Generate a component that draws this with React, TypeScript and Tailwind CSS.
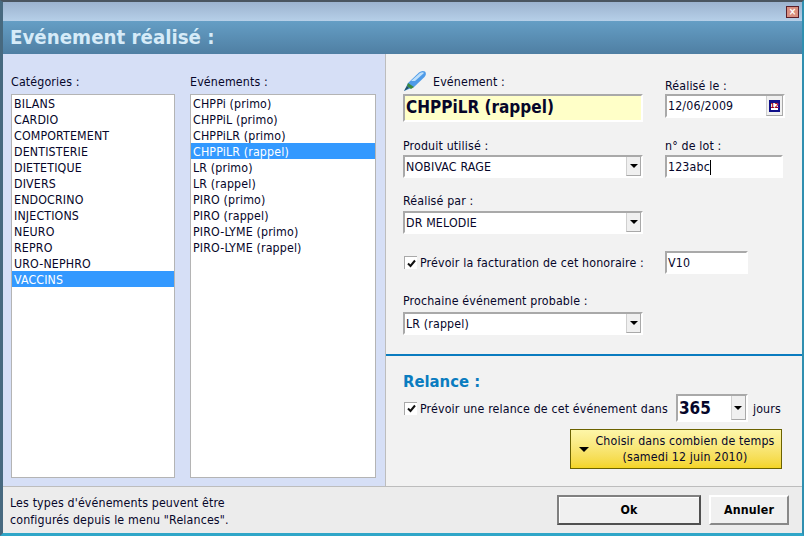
const categories = ['BILANS', 'CARDIO', 'COMPORTEMENT', 'DENTISTERIE', 'DIETETIQUE', 'DIVERS', 'ENDOCRINO', 'INJECTIONS', 'NEURO', 'REPRO', 'URO-NEPHRO', 'VACCINS']
const events = ['CHPPi (primo)', 'CHPPiL (primo)', 'CHPPiLR (primo)', 'CHPPiLR (rappel)', 'LR (primo)', 'LR (rappel)', 'PIRO (primo)', 'PIRO (rappel)', 'PIRO-LYME (primo)', 'PIRO-LYME (rappel)']

const sunken = 'border-2 border-t-[#a9a9a9] border-l-[#a9a9a9] border-r-white border-b-white'

function ListBox({ items, selected, className }: { items: string[]; selected: string; className: string }) {
  return (
    <ul className={`h-[384px] border border-[#b4b4b4] bg-white ${className}`}>
      {items.map((item) => (
        <li key={item} className={`h-4 pl-[2px] leading-[18px] ${item === selected ? 'bg-[#3399ff] text-white' : 'text-[#06062a]'}`}>
          {item}
        </li>
      ))}
    </ul>
  )
}

function Arrow() {
  return <span className="block h-0 w-0 border-x-[4px] border-t-[4px] border-x-transparent border-t-black" />
}

function Combo({ value }: { value: string }) {
  return (
    <div className={`flex h-[23px] w-[240px] items-center justify-between bg-white ${sunken}`}>
      <span className="pt-px pl-[1px] text-[#06062a]">{value}</span>
      <span className="flex h-[19px] w-[15px] items-center justify-center border-r border-b border-l border-r-[#a9a9a9] border-b-[#a9a9a9] border-l-[#d0d0d0] bg-[#f0f0f0]">
        <Arrow />
      </span>
    </div>
  )
}

function Check({ label }: { label: string }) {
  return (
    <label className="flex items-center gap-[3px] text-[#06062a]">
      <span className="flex h-[13px] w-[13px] items-center justify-center border-t border-l border-t-[#a9a9a9] border-l-[#a9a9a9] bg-white">
        <svg width="9" height="9" viewBox="0 0 9 9">
          <path d="M1 4.5 L3.5 7 L8 1.5" fill="none" stroke="#111" strokeWidth="2" />
        </svg>
      </span>
      <span className="pt-[2px]">{label}</span>
    </label>
  )
}

function PenIcon() {
  return (
    <svg width="24" height="21" viewBox="0 0 24 21">
      <path d="M1 21 L5 13 L16 2.5 Q19 0 22 1.5 Q24 4 21.5 7 L11 17 Z" fill="#4f9be8" />
      <path d="M8 11 L17 3 Q20 1.5 21 3 L12 11 Z" fill="#bfe0fb" />
      <path d="M5 13 L11 17 L8 19 L4 16 Z" fill="#3d8a3c" />
      <path d="M1 21 L4 16 L6 18 Z" fill="#27505c" />
    </svg>
  )
}

function CalendarIcon() {
  return (
    <span className="flex h-[12px] w-[11px] items-end justify-center border-2 border-t-[3px] border-[#10108a] bg-white">
      <span className="text-[7px] leading-[7px] font-bold tracking-normal text-[#a00020]">12</span>
    </span>
  )
}

export default function App() {
  return (
    <div className="flex h-[536px] w-[804px] flex-col border-t-2 border-r-2 border-b-[3px] border-l-[3px] border-t-[#4a5560] border-r-[#2f8fb0] border-b-[#2fa6c8] border-l-[#47697f] bg-[#f2f2f2] text-[12.3px] tracking-[0.15px] font-['DejaVu_Sans_Condensed','Noto_Sans',sans-serif]">
      <div className="flex h-[19px] shrink-0 items-center justify-end bg-gradient-to-b from-[#9cb3cf] to-[#b6cfe8] pr-[3px]">
        <span className="flex h-[12px] w-[13px] items-center justify-center border border-[#5a1f2a] bg-[#d98f80] text-[10px] leading-none font-bold text-white">×</span>
      </div>
      <div className="flex h-[33px] shrink-0 items-center bg-gradient-to-b from-[#659ec5] to-[#4f7fa3] pb-px pl-[7px] text-[20.3px] font-bold tracking-normal text-[#d6ebf8]">
        Evénement réalisé :
      </div>
      <div className="flex min-h-0 flex-1">
        <div className="flex w-[383px] shrink-0 gap-[15px] border-r border-[#bdbdbd] bg-[#d6dff6] pl-[8px]">
          <div className="w-[164px] pt-[20px]">
            <p className="h-[20px] leading-4 text-[#06062a]">Catégories :</p>
            <ListBox items={categories} selected="VACCINS" className="w-[164px]" />
          </div>
          <div className="w-[186px] pt-[20px]">
            <p className="h-[20px] leading-4 text-[#06062a]">Evénements :</p>
            <ListBox items={events} selected="CHPPiLR (rappel)" className="w-[186px]" />
          </div>
        </div>
        <div className="flex min-w-0 flex-1 flex-col">
          <div className="h-[302px] border-b-2 border-[#0a7cc0] pl-[17px] text-[#06062a]">
            <div className="mt-[16px] flex gap-[22px]">
              <div className="w-[240px]">
                <div className="flex h-[24px] items-start gap-[6px]">
                  <PenIcon />
                  <span className="pt-[4px] leading-4">Evénement :</span>
                </div>
                <div className={`flex h-[28px] items-center bg-[#ffffc8] pl-[1px] text-[17px] font-bold tracking-normal ${sunken}`}>CHPPiLR (rappel)</div>
              </div>
              <div className="w-[120px] pt-[8px]">
                <p className="h-[16px] leading-4">Réalisé le :</p>
                <div className={`flex h-[24px] items-center justify-between bg-white pl-px ${sunken}`}>
                  12/06/2009
                  <span className="flex h-[20px] w-[17px] items-center justify-center border-r border-b border-l border-r-[#a9a9a9] border-b-[#a9a9a9] border-l-[#d0d0d0] bg-[#f0f0f0]"><CalendarIcon /></span>
                </div>
              </div>
            </div>
            <div className="mt-[15px] flex gap-[22px]">
              <div className="w-[240px]">
                <p className="h-[18px] pt-px leading-4">Produit utilisé :</p>
                <Combo value="NOBIVAC RAGE" />
              </div>
              <div className="w-[118px]">
                <p className="h-[18px] pt-px leading-4">n° de lot :</p>
                <div className={`flex h-[23px] items-center bg-white pt-px pl-px ${sunken}`}>
                  123abc<span className="h-[15px] w-px bg-black" />
                </div>
              </div>
            </div>
            <p className="mt-[15px] h-[18px] leading-4">Réalisé par :</p>
            <Combo value="DR MELODIE" />
            <div className="mt-[17px] flex h-[23px] items-center">
              <div className="w-[262px] pl-px"><Check label="Prévoir la facturation de cet honoraire :" /></div>
              <div className={`flex h-[23px] w-[83px] items-center bg-white pt-px pl-px ${sunken}`}>V10</div>
            </div>
            <p className="mt-[19px] h-[19px] leading-4">Prochaine événement probable :</p>
            <Combo value="LR (rappel)" />
          </div>
          <div className="flex flex-1 flex-col pr-[20px] pl-[17px] text-[#06062a]">
            <p className="mt-[16px] h-[22px] text-[16.5px] leading-5 font-bold tracking-normal text-[#0a7cc0]">Relance :</p>
            <div className="flex h-[28px] items-center pl-px">
              <Check label="Prévoir une relance de cet événement dans" />
              <div className={`ml-[8px] flex h-[28px] w-[72px] shrink-0 items-center justify-between bg-white pl-[1px] text-[17px] font-bold tracking-normal ${sunken}`}>
                <span className="pt-px">365</span>
                <span className="flex h-[24px] w-[15px] items-center justify-center border-r border-b border-l border-r-[#a9a9a9] border-b-[#a9a9a9] border-l-[#d0d0d0] bg-[#f0f0f0]"><Arrow /></span>
              </div>
              <span className="ml-[5px] pt-[2px]">jours</span>
            </div>
            <button type="button" className="mt-[7px] flex h-[40px] w-[212px] items-center gap-[6px] self-end border border-[#6b6200] bg-gradient-to-b from-[#fdf6a8] to-[#f4d522] pr-[6px] pl-[8px] leading-4">
              <span className="block h-0 w-0 border-x-[5px] border-t-[5px] border-x-transparent border-t-black" />
              <span className="flex-1 text-center">Choisir dans combien de temps<br />(samedi 12 juin 2010)</span>
            </button>
          </div>
        </div>
      </div>
      <div className="flex h-[47px] shrink-0 items-center justify-between border-t border-[#bdbdbd] bg-[#ececec] pr-[13px] pl-[7px]">
        <p className="pt-[4px] leading-[17px] text-[#06062a]">Les types d'événements peuvent être<br />configurés depuis le menu "Relances".</p>
        <div className="flex gap-[8px]">
          <button type="button" className="h-[30px] w-[144px] border-2 border-t-[#808080] border-r-[#505050] border-b-[#505050] border-l-[#808080] bg-[#f0f0f0] font-bold shadow-[inset_1px_1px_0_#fff]">Ok</button>
          <button type="button" className="h-[30px] w-[80px] border-2 border-t-white border-r-[#888] border-b-[#888] border-l-white bg-[#f0f0f0] font-bold">Annuler</button>
        </div>
      </div>
    </div>
  )
}
